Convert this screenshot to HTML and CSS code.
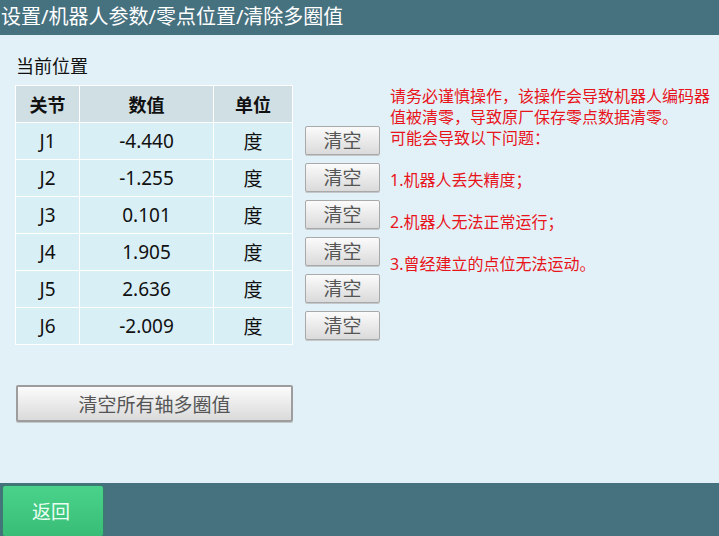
FILE: index.html
```html
<!DOCTYPE html>
<html lang="zh-CN">
<head>
     <meta charset="UTF-8">
     <title>清除多圈值</title>
     <link rel="stylesheet" href="styles.css">
</head>
<body>
     <div class="top-bar">设置/机器人参数/零点位置/清除多圈值</div>
     <div class="main">
          <h3 class="sub-title">当前位置</h3>
          <div class="row">
               <table class="pos-table">
                    <tr><th class="c1">关节</th><th class="c2">数值</th><th class="c3">单位</th></tr>
                    <tr><td>J1</td><td>-4.440</td><td>度</td></tr>
                    <tr><td>J2</td><td>-1.255</td><td>度</td></tr>
                    <tr><td>J3</td><td>0.101</td><td>度</td></tr>
                    <tr><td>J4</td><td>1.905</td><td>度</td></tr>
                    <tr><td>J5</td><td>2.636</td><td>度</td></tr>
                    <tr><td>J6</td><td>-2.009</td><td>度</td></tr>
               </table>
               <div class="clear-col">
                    <div class="slot"><button class="btn">清空</button></div>
                    <div class="slot"><button class="btn">清空</button></div>
                    <div class="slot"><button class="btn">清空</button></div>
                    <div class="slot"><button class="btn">清空</button></div>
                    <div class="slot"><button class="btn">清空</button></div>
                    <div class="slot"><button class="btn">清空</button></div>
               </div>
               <div class="warn">
                    <p>请务必谨慎操作，该操作会导致机器人编码器值被清零，导致原厂保存零点数据清零。</p>
                    <p>可能会导致以下问题：</p>
                    <p class="gap">1.机器人丢失精度；</p>
                    <p class="gap">2.机器人无法正常运行；</p>
                    <p class="gap">3.曾经建立的点位无法运动。</p>
               </div>
          </div>
          <button class="btn btn-all">清空所有轴多圈值</button>
     </div>
     <div class="bottom-bar">
          <button class="back-btn">返回</button>
     </div>
</body>
</html>
```

FILE: styles.css
```css
*{
     padding:0;
     margin:0;
     box-sizing: border-box;
     font-family: "Noto Sans", "Noto Sans CJK SC", sans-serif;
}
html,body{
     width:100%;
     height:100%;
}
body{
     display: flex;
     flex-direction: column;
     background: #e2f1f8;
     overflow: hidden;
}

/* 顶部标题 */
.top-bar{
     height: 35px;
     line-height: 34px;
     background: #46717f;
     color: #fff;
     font-size: 20px;
     padding-left: 1px;
     white-space: nowrap;
}

.main{
     flex: 1;
     padding: 16px 0 0 16px;
}
.sub-title{
     font-size: 18px;
     font-weight: 400;
     color: #111;
     line-height: 30px;
     margin-bottom: 5px;
}
.row{
     display: flex;
     align-items: flex-start;
}

/* 位置表格 */
.pos-table{
     border-collapse: collapse;
     border: 1px solid #fff;
     margin-left: -1px;
     margin-top: -1px;
}
.pos-table th,.pos-table td{
     border: 1px solid #fff;
     height: 37px;
     text-align: center;
     font-size: 19px;
     color: #111;
     padding: 0;
}
.pos-table th{
     background: #d0dfe4;
     font-weight: 700;
     font-size: 18px;
     height: 37px;
}
.pos-table td{
     background: #d9eff6;
}
.c1{width: 64px;}
.c2{width: 134px;}
.c3{width: 79px;}

.clear-col{
     padding-top: 36px;
     margin-left: 12px;
     width: 75px;
}
.slot{
     height: 37px;
     display: flex;
     align-items: center;
}

.btn{
     border: 1px solid #a9a9a9;
     border-radius: 2px;
     background: linear-gradient(#fbfbfb, #dadada);
     color: #555;
     font-size: 19px;
     cursor: pointer;
     box-shadow: 0 1px 0 #c4c8ca;
}
.slot .btn{
     width: 75px;
     height: 29px;
     line-height: 26px;
}

/* 警告说明 */
.warn{
     margin-left: 10px;
     width: 326px;
     color: #e8141b;
     font-size: 16px;
     line-height: 21px;
}
.warn .gap{
     margin-top: 21px;
}

.btn-all{
     margin-top: 40px;
     width: 277px;
     height: 37px;
     border-width: 2px;
     border-color: #9d9d9d;
}

/* 底部 */
.bottom-bar{
     height: 53px;
     background: #46717f;
     padding: 3px 0 0 3px;
}
.back-btn{
     width: 100px;
     height: 50px;
     border: none;
     border-radius: 2px;
     background: linear-gradient(#4ad28b, #39bd76);
     box-shadow: 0 0 3px #2e8a5a;
     color: #eafff2;
     font-size: 19px;
     padding-right: 4px;
     cursor: pointer;
}
```
